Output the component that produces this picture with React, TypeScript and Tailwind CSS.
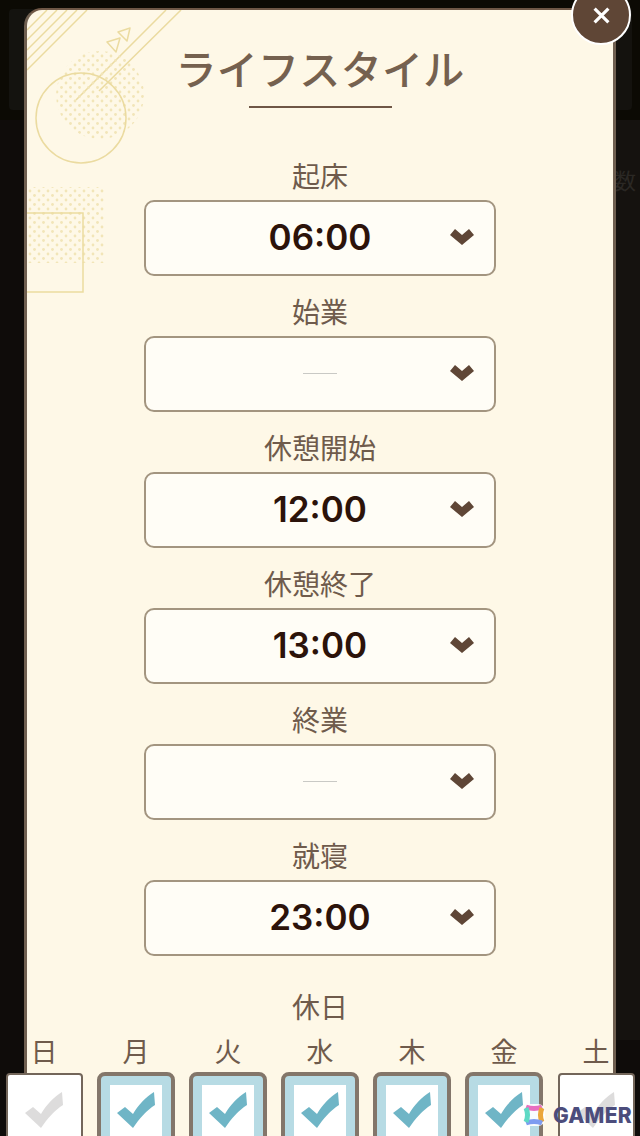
import { FC } from 'react';

const jp = "font-['Noto_Sans_CJK_JP','Noto_Sans',sans-serif]";

const times = [
  { label: '起床', value: '06:00' },
  { label: '始業', value: '' },
  { label: '休憩開始', value: '12:00' },
  { label: '休憩終了', value: '13:00' },
  { label: '終業', value: '' },
  { label: '就寝', value: '23:00' },
];

const days = [
  { label: '日', on: false },
  { label: '月', on: true },
  { label: '火', on: true },
  { label: '水', on: true },
  { label: '木', on: true },
  { label: '金', on: true },
  { label: '土', on: false },
];

const CheckMark: FC<{ color: string }> = ({ color }) => (
  <svg viewBox="0 0 40 38" className="w-[40px] h-[38px]" fill={color}>
    <path d="M1 22 L9 16 L17 23 C22 14 30 6 38 1 L39 14 C31 19 23 28 17 37 Z" />
  </svg>
);

const Decoration: FC = () => (
  <svg
    viewBox="26 10 170 290"
    className="absolute left-0 top-0 w-[170px] h-[290px] pointer-events-none"
    fill="none"
    stroke="#ebdba0"
    strokeWidth="1.5"
  >
    <defs>
      <pattern id="dots" width="9" height="9" patternUnits="userSpaceOnUse">
        <circle cx="2" cy="2" r="1.4" fill="#f2e5b8" stroke="none" />
        <circle cx="6.5" cy="6.5" r="1.4" fill="#f2e5b8" stroke="none" />
      </pattern>
      <clipPath id="dotCircle">
        <circle cx="99" cy="95" r="44" />
      </clipPath>
    </defs>
    <path d="M26 30 L46 10 M26 40 L56 10 M26 50 L66 10 M26 60 L76 10 M26 70 L86 10" />
    <path d="M165 10 L75 100 M180 10 L98 91" />
    <rect x="55" y="50" width="90" height="90" fill="url(#dots)" stroke="none" clipPath="url(#dotCircle)" />
    <circle cx="80" cy="118" r="45" />
    <rect x="26" y="187" width="78" height="76" fill="url(#dots)" stroke="none" />
    <path d="M26 213 H82 V292 H26" />
    <path d="M129 28 L117 32 L126 41 Z M119 38 L106 42 L115 52 Z" strokeLinejoin="round" />
  </svg>
);

const TimeSelect: FC<{ label: string; value: string }> = ({ label, value }) => (
  <div className="flex flex-col items-center">
    <div className={`${jp} text-[28px] leading-[40px] h-[40px] text-[#6f5b4c]`}>{label}</div>
    <div className="relative mt-[5px] w-[352px] h-[76px] rounded-[10px] border-2 border-[#a39580] bg-[#fffdf6] flex items-center justify-center pb-[2px]">
      {value ? (
        <span className="font-['Inter',sans-serif] font-semibold text-[35px] text-[#2c130a]">{value}</span>
      ) : (
        <span className="block w-[34px] h-px bg-[#c9c9c5]" />
      )}
      <svg viewBox="0 0 24 16" className="absolute right-[20px] top-[27px] w-[24px] h-[16px]" fill="#5f4636">
        <path d="M0 6 L5 0 L12 6 L19 0 L24 6 L12 16 Z" />
      </svg>
    </div>
  </div>
);

const DayBox: FC<{ label: string; on: boolean }> = ({ label, on }) => (
  <div className="w-[78px] flex flex-col items-center">
    <div className={`${jp} text-[27px] leading-[40px] h-[40px] text-[#6f5b4c]`}>{label}</div>
    <div
      className={
        on
          ? 'mt-[1px] w-[78px] h-[80px] rounded-[8px] border-[4px] border-[#83766a] bg-[#b7dbe4] px-[9px] pt-[9px]'
          : 'mt-[2px] w-[77px] h-[80px] rounded-[4px] border-2 border-[#73665a] bg-white'
      }
    >
      {on ? (
        <div className="w-full h-[60px] bg-white flex justify-center pt-[6px]">
          <CheckMark color="#6fb5c6" />
        </div>
      ) : (
        <div className="flex justify-center pt-[16px]">
          <CheckMark color="#dddcdc" />
        </div>
      )}
    </div>
  </div>
);

const GamerMark: FC = () => (
  <div className="absolute left-[522px] top-[1103px] flex items-center gap-[7px]">
    <svg viewBox="0 0 24 24" className="w-[24px] h-[24px]" fill="none" strokeWidth="5">
      <rect x="1" y="1" width="22" height="22" rx="7" fill="#ffffff" stroke="none" opacity="0.9" />
      <path d="M4 4 Q12 7 20 4" stroke="#e86fc0" />
      <path d="M20 5 Q17 12 20 19" stroke="#eba63a" />
      <path d="M20 20 Q12 17 4 20" stroke="#7d9cf0" />
      <path d="M4 19 Q7 12 4 5" stroke="#5ed9c4" />
    </svg>
    <span className="font-['Inter',sans-serif] font-extrabold text-[21px] leading-none tracking-[0.2px] text-[#4c4d7c]">GAMER</span>
  </div>
);

export default function App() {
  return (
    <div className="relative w-[640px] h-[1136px] overflow-hidden bg-[#0f0c0a]">
      {/* dimmed page behind the dialog */}
      <div className="absolute left-0 top-0 w-full h-[120px] bg-[#0c0a04]" />
      <div className="absolute left-[9px] top-[9px] w-[40px] h-[101px] rounded-[4px] bg-[#14130f]" />
      <div className="absolute right-[8px] top-[9px] w-[40px] h-[101px] rounded-[4px] bg-[#14120e]" />
      <div className="absolute right-0 top-[120px] w-[26px] h-[920px] bg-[#15120f]" />
      <div className={`${jp} absolute left-[614px] top-[163px] text-[22px] text-[#2b2824]`}>数</div>

      <div className="mx-[24px] mt-[8px] w-[592px] h-[1180px] rounded-t-[18px] border-x-[3px] border-t-[2px] border-x-[#6f5f50] border-t-[#6f5746] bg-[#fef8e7] relative">
        <Decoration />
        <div className="flex flex-col items-center pt-[30px]">
          <h1 className={`${jp} font-medium text-[41px] leading-[54px] tracking-[0.3px] text-[#75614f]`}>ライフスタイル</h1>
          <div className="mt-[12px] w-[143px] h-[2px] bg-[#6f5746]" />
        </div>
        <div className="mt-[47px] flex flex-col gap-[15px]">
          {times.map((t) => (
            <TimeSelect key={t.label} label={t.label} value={t.value} />
          ))}
        </div>
        <div className={`${jp} mt-[30px] text-center text-[28px] leading-[40px] text-[#6f5b4c]`}>休日</div>
        <div className="-ml-[22px] mt-[5px] flex gap-[14px] w-[630px]">
          {days.map((d) => (
            <DayBox key={d.label} label={d.label} on={d.on} />
          ))}
        </div>
      </div>

      {/* close button */}
      <div className="absolute left-[571px] -top-[15px] w-[60px] h-[60px] rounded-full border-2 border-white bg-[#5f4636] flex items-center justify-center pt-[1px]">
        <svg viewBox="0 0 16 16" className="w-[17px] h-[17px]" stroke="#ffffff" strokeWidth="3" fill="none">
          <path d="M1.5 1.5 L14.5 14.5 M14.5 1.5 L1.5 14.5" />
        </svg>
      </div>

      <GamerMark />
    </div>
  );
}
